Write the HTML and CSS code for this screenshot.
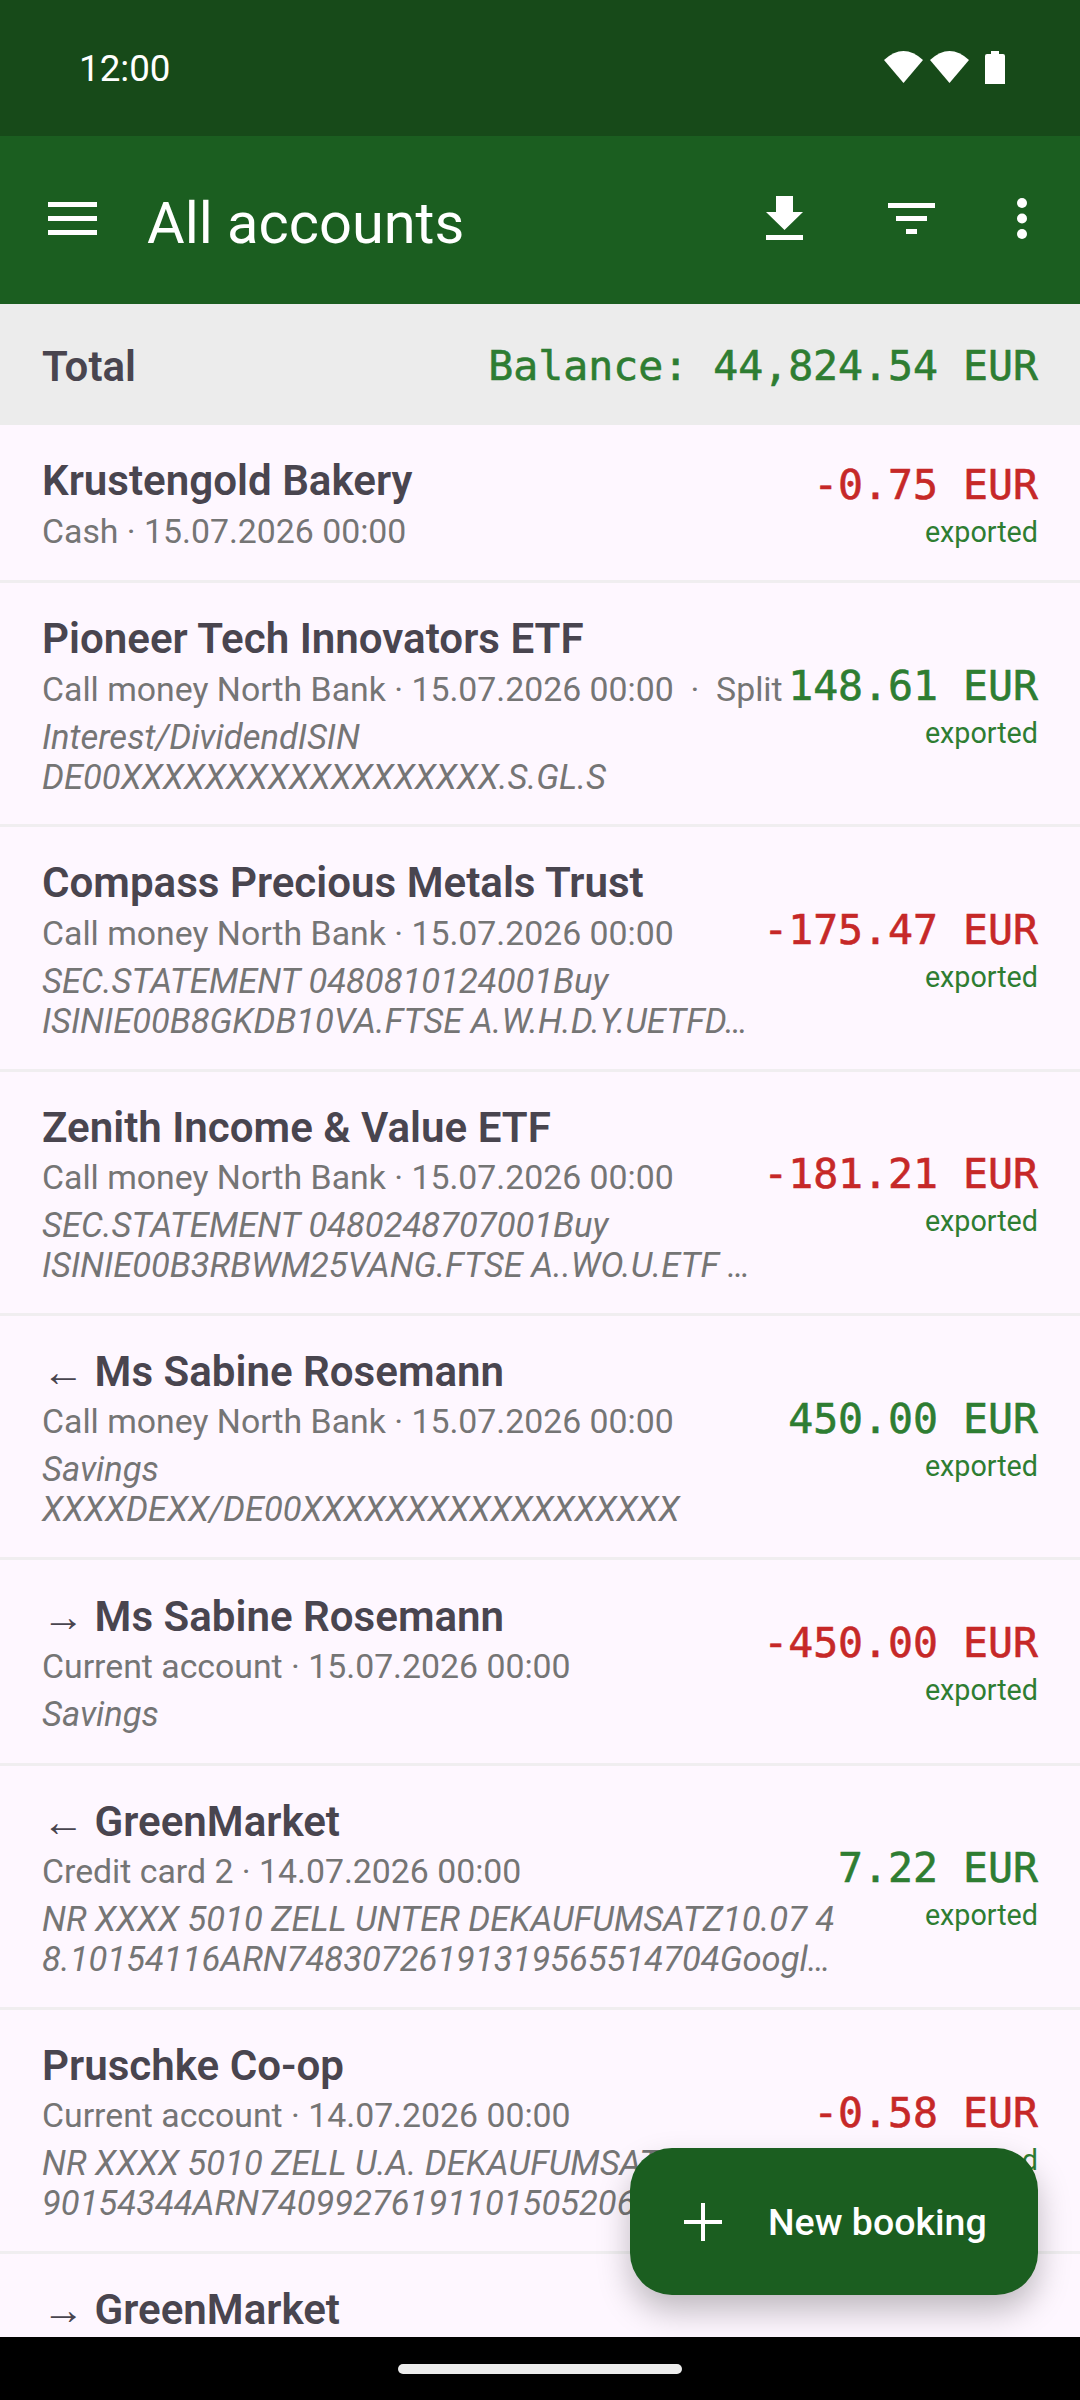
FILE: index.html
```html
<!DOCTYPE html>
<html lang="en">
<head>
    <meta charset="UTF-8">
    <meta name="viewport" content="width=device-width, initial-scale=1.0">
    <title>All accounts</title>
    <link rel="stylesheet" href="styles.css">
</head>
<body>
    <div class="status-bar">
        <span class="clock">12:00</span>
        <div class="status-icons">
            <svg width="39" height="32" viewBox="0 0 39 32"><path d="M0 9 Q19.5 -9 39 9 L19.5 32 Z" fill="#fff"/></svg>
            <svg width="39" height="32" viewBox="0 0 39 32"><path d="M0 9 Q19.5 -9 39 9 L19.5 32 Z" fill="#fff"/></svg>
            <svg class="battery" width="20" height="33" viewBox="0 0 20 33"><path d="M6 0 H14 V3 H18 Q20 3 20 5 V33 H0 V5 Q0 3 2 3 H6 Z" fill="#fff"/></svg>
        </div>
    </div>

    <header class="app-bar">
        <svg class="menu-icon" width="49" height="33" viewBox="0 0 49 33"><path d="M0 0 H49 V5 H0 Z M0 14 H49 V19 H0 Z M0 28 H49 V33 H0 Z" fill="#fff"/></svg>
        <h1>All accounts</h1>
        <div class="actions">
            <svg class="act-download" width="37" height="44" viewBox="0 0 37 44"><path d="M10 0 H27 V16 H37 L18.5 34 L0 16 H10 Z M0 39 H37 V44 H0 Z" fill="#fff"/></svg>
            <svg class="act-filter" width="47" height="31" viewBox="0 0 47 31"><path d="M0 0 H47 V5 H0 Z M8 13 H39 V18 H8 Z M18 26 H29 V31 H18 Z" fill="#fff"/></svg>
            <svg class="act-more" width="10" height="41" viewBox="0 0 10 41"><circle cx="5" cy="5" r="5" fill="#fff"/><circle cx="5" cy="20.5" r="5" fill="#fff"/><circle cx="5" cy="36" r="5" fill="#fff"/></svg>
        </div>
    </header>

    <div class="total-row">
        <span class="total-label">Total</span>
        <span class="amount pos">Balance: 44,824.54 EUR</span>
    </div>

    <main class="list">
        <div class="row">
            <div class="info">
                <div class="name">Krustengold Bakery</div>
                <div class="sub">Cash · 15.07.2026 00:00</div>
            </div>
            <div class="side">
                <div class="amount neg">-0.75 EUR</div>
                <div class="state">exported</div>
            </div>
        </div>

        <div class="row">
            <div class="info">
                <div class="name">Pioneer Tech Innovators ETF</div>
                <div class="sub">Call money North Bank · 15.07.2026 00:00 &nbsp;·&nbsp; Split</div>
                <div class="note">Interest/DividendISIN</div>
                <div class="note">DE00XXXXXXXXXXXXXXXXXX.S.GL.S</div>
            </div>
            <div class="side">
                <div class="amount pos">148.61 EUR</div>
                <div class="state">exported</div>
            </div>
        </div>

        <div class="row">
            <div class="info">
                <div class="name">Compass Precious Metals Trust</div>
                <div class="sub">Call money North Bank · 15.07.2026 00:00</div>
                <div class="note">SEC.STATEMENT 0480810124001Buy</div>
                <div class="note">ISINIE00B8GKDB10VA.FTSE A.W.H.D.Y.UETFD…</div>
            </div>
            <div class="side">
                <div class="amount neg">-175.47 EUR</div>
                <div class="state">exported</div>
            </div>
        </div>

        <div class="row">
            <div class="info">
                <div class="name">Zenith Income &amp; Value ETF</div>
                <div class="sub">Call money North Bank · 15.07.2026 00:00</div>
                <div class="note">SEC.STATEMENT 0480248707001Buy</div>
                <div class="note">ISINIE00B3RBWM25VANG.FTSE A..WO.U.ETF …</div>
            </div>
            <div class="side">
                <div class="amount neg">-181.21 EUR</div>
                <div class="state">exported</div>
            </div>
        </div>

        <div class="row">
            <div class="info">
                <div class="name"><span class="arrow">←</span> Ms Sabine Rosemann</div>
                <div class="sub">Call money North Bank · 15.07.2026 00:00</div>
                <div class="note">Savings</div>
                <div class="note">XXXXDEXX/DE00XXXXXXXXXXXXXXXXXX</div>
            </div>
            <div class="side">
                <div class="amount pos">450.00 EUR</div>
                <div class="state">exported</div>
            </div>
        </div>

        <div class="row row-short">
            <div class="info">
                <div class="name"><span class="arrow">→</span> Ms Sabine Rosemann</div>
                <div class="sub">Current account · 15.07.2026 00:00</div>
                <div class="note">Savings</div>
            </div>
            <div class="side">
                <div class="amount neg">-450.00 EUR</div>
                <div class="state">exported</div>
            </div>
        </div>

        <div class="row">
            <div class="info">
                <div class="name"><span class="arrow">←</span> GreenMarket</div>
                <div class="sub">Credit card 2 · 14.07.2026 00:00</div>
                <div class="note">NR XXXX 5010 ZELL UNTER DEKAUFUMSATZ10.07 4</div>
                <div class="note">8.10154116ARN74830726191319565514704Googl…</div>
            </div>
            <div class="side">
                <div class="amount pos">7.22 EUR</div>
                <div class="state">exported</div>
            </div>
        </div>

        <div class="row">
            <div class="info">
                <div class="name">Pruschke Co-op</div>
                <div class="sub">Current account · 14.07.2026 00:00</div>
                <div class="note">NR XXXX 5010 ZELL U.A. DEKAUFUMSATZ10.07 4</div>
                <div class="note">90154344ARN74099276191101505206Google…</div>
            </div>
            <div class="side">
                <div class="amount neg">-0.58 EUR</div>
                <div class="state">exported</div>
            </div>
        </div>

        <div class="row row-cut">
            <div class="info">
                <div class="name"><span class="arrow">→</span> GreenMarket</div>
            </div>
        </div>

        <button class="fab">
            <svg width="38" height="38" viewBox="0 0 38 38"><path d="M17 0 H21 V17 H38 V21 H21 V38 H17 V21 H0 V17 H17 Z" fill="#fff"/></svg>
            <span>New booking</span>
        </button>
    </main>

    <div class="nav-bar"><div class="home-pill"></div></div>
</body>
</html>
```

FILE: styles.css
```css
* {
    box-sizing: border-box;
}

body {
    margin: 0;
    width: 1080px;
    height: 2400px;
    display: flex;
    flex-direction: column;
    overflow: hidden;
    background: #fef7ff;
    font-family: 'Roboto', sans-serif;
}

.status-bar {
    height: 136px;
    flex: none;
    display: flex;
    align-items: center;
    justify-content: space-between;
    padding: 0 75px 0 79px;
    background: #174a19;
    color: #fff;
}

.clock {
    font-size: 36.75px;
}

.status-icons {
    display: flex;
    align-items: center;
    gap: 7px;
    padding-bottom: 2px;
}

.battery {
    margin-left: 9px;
}

.app-bar {
    height: 168px;
    flex: none;
    display: flex;
    align-items: center;
    padding: 0 0 0 48px;
    background: #1b5e20;
    color: #fff;
}

.menu-icon {
    margin-bottom: 3px;
}

.app-bar h1 {
    margin: 6px 0 0 50px;
    font-size: 57.75px;
    font-weight: 400;
}

.actions {
    margin-left: auto;
    display: flex;
    align-items: center;
    padding: 0 53px 4px 0;
}

.act-download {
    margin-right: 85px;
}

.act-filter {
    margin-right: 82px;
}

.total-row {
    height: 121px;
    flex: none;
    display: flex;
    align-items: center;
    justify-content: space-between;
    padding: 2px 42px 0;
    background: #ececec;
}

.total-label {
    margin-top: 2px;
    font-size: 42px;
    font-weight: 600;
    color: #49454f;
}

.amount {
    font-family: 'DejaVu Sans Mono', monospace;
    font-size: 41.5px;
    line-height: 50px;
    white-space: nowrap;
    -webkit-text-stroke: 0.6px currentColor;
}

.pos {
    color: #2e7d32;
}

.neg {
    color: #c62828;
}

.list {
    flex: 1;
    min-height: 0;
    position: relative;
    overflow: hidden;
}

.row {
    display: flex;
    align-items: center;
    min-height: 158px;
    padding: 31px 42px 27.75px;
    border-bottom: 3px solid #f0eef0;
}

.row-short {
    min-height: 205.5px;
}

.row-cut {
    min-height: 0;
}

.info {
    flex: 1;
    min-width: 0;
}

.name {
    font-size: 42.1px;
    font-weight: 600;
    line-height: 49px;
    color: #49454f;
    white-space: nowrap;
}

.sub {
    margin-top: 6.5px;
    font-size: 33.8px;
    line-height: 40px;
    color: #757575;
    white-space: nowrap;
}

.sub + .note {
    margin-top: 7px;
}

.note {
    font-size: 34.55px;
    line-height: 40px;
    font-style: italic;
    color: #757575;
    white-space: nowrap;
}

.side {
    flex: none;
    margin-left: 8px;
    text-align: right;
}

.state {
    margin-top: 5px;
    font-size: 28.7px;
    line-height: 34px;
    color: #2e7d32;
}

.fab {
    position: absolute;
    right: 42px;
    bottom: 42px;
    width: 408px;
    height: 147px;
    display: flex;
    align-items: center;
    gap: 46px;
    padding: 0 0 0 54px;
    border: none;
    border-radius: 42px;
    background: #1b5e20;
    color: #fff;
    font-family: 'Roboto', sans-serif;
    font-size: 37.5px;
    font-weight: 500;
    box-shadow: 0 16px 32px rgba(0, 0, 0, 0.25);
}

.nav-bar {
    height: 63px;
    flex: none;
    display: flex;
    align-items: center;
    justify-content: center;
    background: #000;
}

.home-pill {
    width: 284px;
    height: 10px;
    border-radius: 5px;
    background: #ececec;
}
```
